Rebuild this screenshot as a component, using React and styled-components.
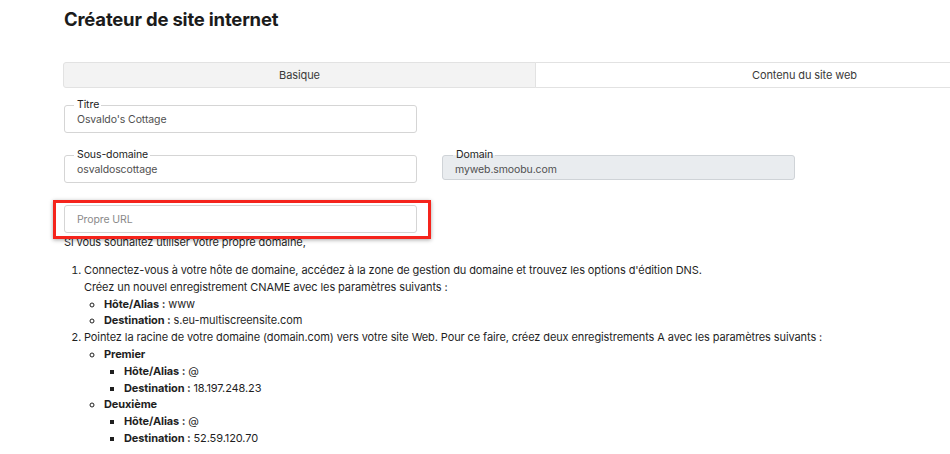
import React from "react";
import styled, { createGlobalStyle } from "styled-components";

const GlobalStyle = createGlobalStyle`
  html, body {
    margin: 0;
    padding: 0;
    background: #fff;
    overflow: hidden;
  }
  body {
    font-family: "Inter", "Open Sans", sans-serif;
    color: #1f1f1f;
  }
`;

const Page = styled.div`
  padding: 7px 0 0 64px;
  width: 1010px;
`;

const Heading = styled.h1`
  margin: 0;
  font-size: 18.5px;
  font-weight: 700;
  letter-spacing: -0.2px;
  color: #1b1b1b;
  line-height: 24px;
`;

const Tabs = styled.div`
  display: flex;
  margin: 31px 0 0 -1px;
  height: 26px;
`;

const Tab = styled.div`
  flex: ${(p) => p.$grow};
  display: flex;
  align-items: center;
  justify-content: center;
  font-size: 11px;
  letter-spacing: -0.1px;
  color: #3a3a3a;
  background: ${(p) => (p.$active ? "#f3f3f3" : "#fff")};
  border: 1px solid #e2e2e2;
  border-radius: ${(p) => (p.$active ? "3px 0 0 3px" : "0 3px 3px 0")};
  & + & {
    margin-left: -1px;
  }
`;

const Row = styled.div`
  display: flex;
  gap: 25px;
  margin-top: ${(p) => p.$top}px;
`;

const Field = styled.div`
  position: relative;
  width: 353px;
  height: ${(p) => (p.$short ? 25 : 28)}px;
  box-sizing: border-box;
  border: 1px solid ${(p) => (p.$disabled ? "#cfd3d7" : "#d5d5d5")};
  border-radius: 3px;
  background: ${(p) => (p.$disabled ? "#e9ecef" : "#fff")};
  display: flex;
  align-items: ${(p) => (p.$placeholder ? "center" : "flex-start")};
  padding: ${(p) => (p.$placeholder ? "0 12px" : "7px 12px 0")};
`;

const Legend = styled.span`
  position: absolute;
  top: -7px;
  left: ${(p) => (p.$disabled ? 10 : 9)}px;
  padding: 0 2px 0 3px;
  font-size: 10.5px;
  line-height: 12px;
  letter-spacing: -0.1px;
  color: #222;
  background: ${(p) => (p.$disabled ? "linear-gradient(#fff 50%, #e9ecef 50%)" : "#fff")};
`;

const Value = styled.span`
  font-size: 10.5px;
  letter-spacing: -0.1px;
  color: ${(p) => (p.$placeholder ? "#8a8a8a" : "#4f4f4f")};
  line-height: 13px;
`;

const Highlight = styled.div`
  position: relative;
  width: 353px;
  margin-top: 22px;
  &::after {
    content: "";
    position: absolute;
    left: -11px;
    right: -14px;
    top: -5px;
    bottom: -6px;
    border: 3px solid #f5241c;
    box-shadow: 0 1px 4px rgba(0, 0, 0, 0.35);
    pointer-events: none;
  }
`;

const Intro = styled.div`
  margin-top: 1px;
  font-size: 11px;
  letter-spacing: -0.1px;
  line-height: 17px;
  color: #1f1f1f;
`;

const Ordered = styled.ol`
  margin: 11px 0 0;
  padding-left: 20px;
  font-size: 11px;
  letter-spacing: -0.1px;
  line-height: 16.8px;
  color: #1f1f1f;
`;

const Circles = styled.ul`
  margin: 0;
  padding-left: 20px;
  list-style-type: circle;
`;

const Squares = styled.ul`
  margin: 0;
  padding-left: 20px;
  list-style-type: square;
`;

const Strong = styled.b`
  font-weight: 700;
`;

function Entry({ label, value }) {
  return (
    <li>
      <Strong>{label} :</Strong> {value}
    </li>
  );
}

export default function App() {
  return (
    <>
      <GlobalStyle />
      <Page>
        <Heading>Créateur de site internet</Heading>
        <Tabs>
          <Tab $active $grow={470}>Basique</Tab>
          <Tab $grow={536}>Contenu du site web</Tab>
        </Tabs>

        <Row $top={17}>
          <Field>
            <Legend>Titre</Legend>
            <Value>Osvaldo's Cottage</Value>
          </Field>
        </Row>

        <Row $top={22}>
          <Field>
            <Legend>Sous-domaine</Legend>
            <Value>osvaldoscottage</Value>
          </Field>
          <Field $disabled $short>
            <Legend $disabled>Domain</Legend>
            <Value>myweb.smoobu.com</Value>
          </Field>
        </Row>

        <Highlight>
          <Field $placeholder>
            <Value $placeholder>Propre URL</Value>
          </Field>
        </Highlight>

        <Intro>Si vous souhaitez utiliser votre propre domaine,</Intro>

        <Ordered>
          <li>
            Connectez-vous à votre hôte de domaine, accédez à la zone de gestion du domaine et trouvez les options d'édition DNS.
            <br />
            Créez un nouvel enregistrement CNAME avec les paramètres suivants :
            <Circles>
              <Entry label="Hôte/Alias" value="www" />
              <Entry label="Destination" value="s.eu-multiscreensite.com" />
            </Circles>
          </li>
          <li>
            Pointez la racine de votre domaine (domain.com) vers votre site Web. Pour ce faire, créez deux enregistrements A avec les paramètres suivants :
            <Circles>
              <li>
                <Strong>Premier</Strong>
                <Squares>
                  <Entry label="Hôte/Alias" value="@" />
                  <Entry label="Destination" value="18.197.248.23" />
                </Squares>
              </li>
              <li>
                <Strong>Deuxième</Strong>
                <Squares>
                  <Entry label="Hôte/Alias" value="@" />
                  <Entry label="Destination" value="52.59.120.70" />
                </Squares>
              </li>
            </Circles>
          </li>
        </Ordered>
      </Page>
    </>
  );
}
